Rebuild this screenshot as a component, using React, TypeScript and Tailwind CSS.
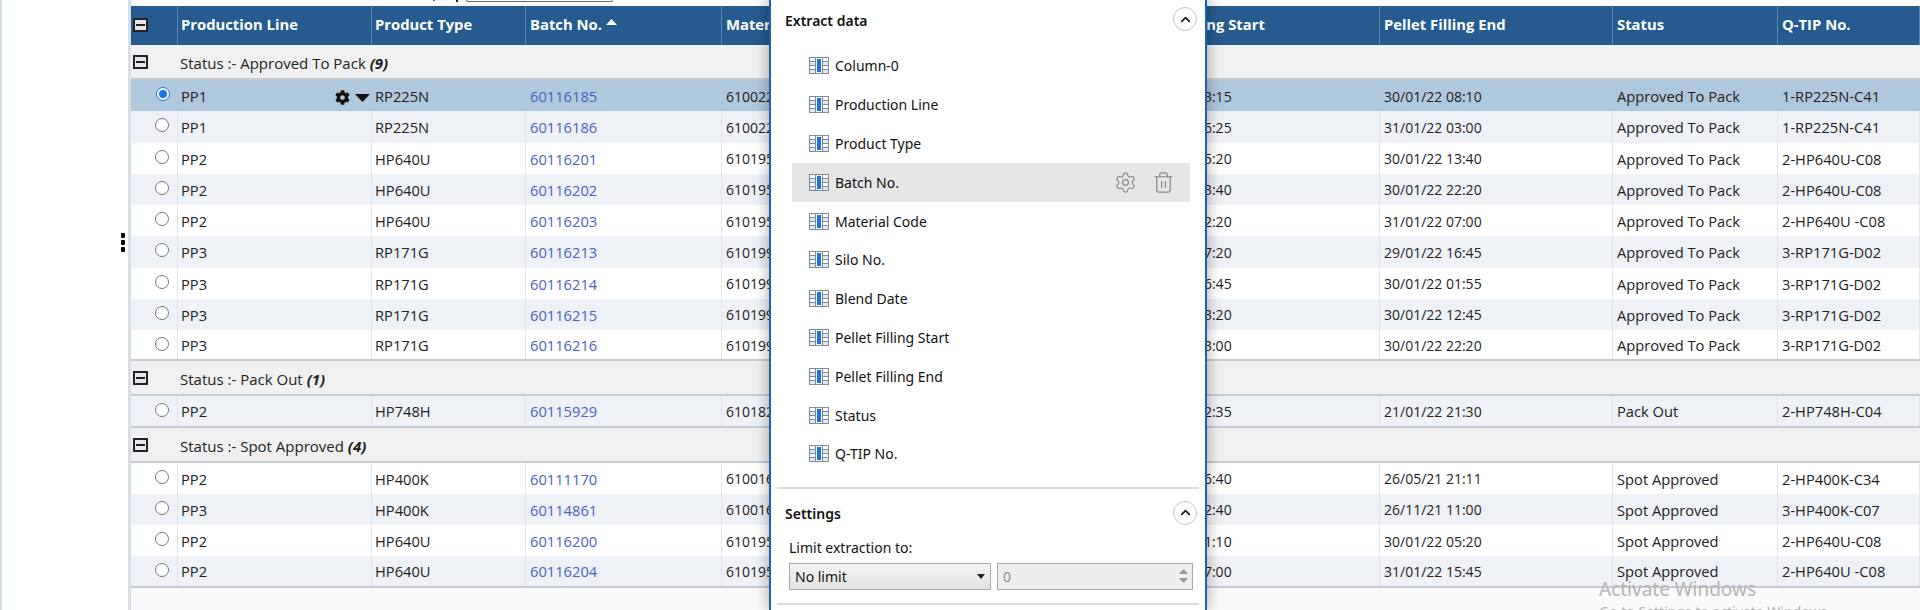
import { Settings, Trash2, ChevronUp } from "lucide-react";
import { FaCog } from "react-icons/fa";

const COLS = "grid grid-cols-[47px_194px_154px_196px_160px_124px_124px_250px_233px_165px_142px]";

type Row = { line: string; type: string; batch: string; code: string; start: string; end: string; qtip: string };

const groups: { status: string; count: number; rows: Row[] }[] = [
    {
        status: "Approved To Pack",
        count: 9,
        rows: [
            { line: "PP1", type: "RP225N", batch: "60116185", code: "61002250", start: "30/01/22 03:15", end: "30/01/22 08:10", qtip: "1-RP225N-C41" },
            { line: "PP1", type: "RP225N", batch: "60116186", code: "61002250", start: "30/01/22 16:25", end: "31/01/22 03:00", qtip: "1-RP225N-C41" },
            { line: "PP2", type: "HP640U", batch: "60116201", code: "61019500", start: "30/01/22 05:20", end: "30/01/22 13:40", qtip: "2-HP640U-C08" },
            { line: "PP2", type: "HP640U", batch: "60116202", code: "61019500", start: "30/01/22 13:40", end: "30/01/22 22:20", qtip: "2-HP640U-C08" },
            { line: "PP2", type: "HP640U", batch: "60116203", code: "61019500", start: "30/01/22 22:20", end: "31/01/22 07:00", qtip: "2-HP640U -C08" },
            { line: "PP3", type: "RP171G", batch: "60116213", code: "61019900", start: "29/01/22 07:20", end: "29/01/22 16:45", qtip: "3-RP171G-D02" },
            { line: "PP3", type: "RP171G", batch: "60116214", code: "61019900", start: "29/01/22 16:45", end: "30/01/22 01:55", qtip: "3-RP171G-D02" },
            { line: "PP3", type: "RP171G", batch: "60116215", code: "61019900", start: "30/01/22 03:20", end: "30/01/22 12:45", qtip: "3-RP171G-D02" },
            { line: "PP3", type: "RP171G", batch: "60116216", code: "61019900", start: "30/01/22 13:00", end: "30/01/22 22:20", qtip: "3-RP171G-D02" },
        ],
    },
    {
        status: "Pack Out",
        count: 1,
        rows: [{ line: "PP2", type: "HP748H", batch: "60115929", code: "61018200", start: "21/01/22 12:35", end: "21/01/22 21:30", qtip: "2-HP748H-C04" }],
    },
    {
        status: "Spot Approved",
        count: 4,
        rows: [
            { line: "PP2", type: "HP400K", batch: "60111170", code: "61001600", start: "26/05/21 06:40", end: "26/05/21 21:11", qtip: "2-HP400K-C34" },
            { line: "PP3", type: "HP400K", batch: "60114861", code: "61001600", start: "26/11/21 02:40", end: "26/11/21 11:00", qtip: "3-HP400K-C07" },
            { line: "PP2", type: "HP640U", batch: "60116200", code: "61019500", start: "29/01/22 21:10", end: "30/01/22 05:20", qtip: "2-HP640U-C08" },
            { line: "PP2", type: "HP640U", batch: "60116204", code: "61019500", start: "31/01/22 07:00", end: "31/01/22 15:45", qtip: "2-HP640U -C08" },
        ],
    },
];

const headers = ["Production Line", "Product Type", "Batch No.", "Material Code", "Silo No.", "Blend Date", "Pellet Filling Start", "Pellet Filling End", "Status", "Q-TIP No."];

const fields = ["Column-0", "Production Line", "Product Type", "Batch No.", "Material Code", "Silo No.", "Blend Date", "Pellet Filling Start", "Pellet Filling End", "Status", "Q-TIP No."];

const MinusBox = () => (
    <span className="flex h-[14px] w-[15px] items-center justify-center border-2 border-[#222] bg-[#e8e8e8]">
        <span className="h-[2px] w-[9px] bg-[#222]" />
    </span>
);

const Radio = ({ checked }: { checked?: boolean }) => (
    <span className={`block h-[14px] w-[14px] rounded-full border bg-white ${checked ? "border-[#1a73e8]" : "border-[#777]"}`}>
        {checked && <span className="m-[2px] block h-[8px] w-[8px] rounded-full bg-[#1a73e8]" />}
    </span>
);

// blue middle column, ruled side columns
const ColumnIcon = () => (
    <svg width="20" height="17" viewBox="0 0 20 17" className="shrink-0">
        <rect x="0" y="0" width="20" height="17" fill="#7f8b96" />
        <rect x="1" y="1" width="5" height="3" fill="#fff" />
        <rect x="1" y="5" width="5" height="3" fill="#e4e8ec" />
        <rect x="1" y="9" width="5" height="3" fill="#fff" />
        <rect x="1" y="13" width="5" height="3" fill="#e4e8ec" />
        <rect x="7" y="1" width="6" height="15" fill="#fff" />
        <rect x="8" y="2" width="4" height="13" fill="#1a73e8" />
        <rect x="14" y="1" width="5" height="3" fill="#fff" />
        <rect x="14" y="5" width="5" height="3" fill="#e4e8ec" />
        <rect x="14" y="9" width="5" height="3" fill="#fff" />
        <rect x="14" y="13" width="5" height="3" fill="#e4e8ec" />
    </svg>
);

const CollapseButton = () => (
    <span className="flex h-[24px] w-[24px] -translate-y-[1px] items-center justify-center rounded-full border border-[#c4c4c4] bg-white">
        <ChevronUp size={15} strokeWidth={3} className="text-[#222]" />
    </span>
);

function DataRow({ row, status, index, selected, last }: { row: Row; status: string; index: number; selected: boolean; last: boolean }) {
    const bg = selected ? "bg-[#b0c8dc]" : index % 2 === 1 ? "bg-[#eef2f6]" : "bg-white";
    const line = selected ? "" : "border-r border-[#e2e6ea]";
    const cell = `flex items-center overflow-hidden whitespace-nowrap pt-[1px] ${line}`;
    return (
        <div className={`${COLS} h-[31.25px] ${bg} ${last ? "border-b-2 border-[#c4ccd1]" : ""} text-[14.7px] text-[#222]`}>
            <div className={`flex justify-end pr-[8px] pt-[7px] ${line}`}>
                <Radio checked={selected} />
            </div>
            <div className={`${cell} justify-between pl-[3px] pr-[2px]`}>
                <span>{row.line}</span>
                {selected && (
                    <span className="flex items-center gap-[5px] pt-[3px]">
                        <FaCog size={15} className="text-[#111]" />
                        <svg width="15" height="8" viewBox="0 0 15 8">
                            <polygon points="0,0 15,0 7.5,8" fill="#111" />
                        </svg>
                    </span>
                )}
            </div>
            <div className={`${cell} pl-[3px]`}>{row.type}</div>
            <div className={`${cell} pl-[4px] text-[#4a5fc4]`}>{row.batch}</div>
            <div className={`${cell} pl-[4px] text-[14px]`}>{row.code}</div>
            <div className={cell} />
            <div className={cell} />
            <div className={`${cell} pl-[4px] text-[14px]`}>{row.start}</div>
            <div className={`${cell} pl-[4px] text-[14px]`}>{row.end}</div>
            <div className={`${cell} pl-[4px]`}>{status}</div>
            <div className={`${cell} pl-[4px]`}>{row.qtip}</div>
        </div>
    );
}

function FieldList() {
    return (
        <div className="mt-[6.5px] flex flex-col">
            {fields.map((name) => {
                const hovered = name === "Batch No.";
                return (
                    <div key={name} className={`ml-[21px] mr-[15px] flex h-[38.8px] items-center pl-[17px] pr-[15px] ${hovered ? "bg-[#e6e6e6]" : ""}`}>
                        <ColumnIcon />
                        <span className="ml-[6px] flex-1 text-[14px] text-[#111]">{name}</span>
                        {hovered && (
                            <span className="flex items-center gap-[15px] text-[#7c8791]">
                                <Settings size={23} strokeWidth={1.2} />
                                <Trash2 size={23} strokeWidth={1.2} />
                            </span>
                        )}
                    </div>
                );
            })}
        </div>
    );
}

function ExtractPanel() {
    return (
        <div className="absolute bottom-0 left-[769px] top-0 w-[438px] overflow-hidden border-x-2 border-[#1b62b0] bg-white font-['Noto_Sans',sans-serif] shadow-[0_0_14px_rgba(0,0,0,0.35)]">
            <div className="flex h-[40px] items-center justify-between pl-[14px] pr-[8px]">
                <span className="text-[14px] font-semibold text-[#111]">Extract data</span>
                <CollapseButton />
            </div>
            <FieldList />
            <div className="mx-[6px] mt-[13.5px] h-[2px] bg-[#dcdcdc]" />
            <div className="mt-[13px] flex items-center justify-between pl-[14px] pr-[8px]">
                <span className="text-[14px] font-semibold text-[#111]">Settings</span>
                <CollapseButton />
            </div>
            <div className="ml-[18px] mt-[12px] text-[14px] leading-[20px] text-[#111]">Limit extraction to:</div>
            <div className="ml-[18px] mt-[5px] flex gap-[6px]">
                <div className="flex h-[27px] w-[202px] items-center justify-between border border-[#a9a9a9] bg-gradient-to-b from-[#f4f4f4] to-[#e2e2e2] pl-[5px] pr-[5px] text-[14px] text-[#111]">
                    <span>No limit</span>
                    <svg width="8" height="5" viewBox="0 0 8 5">
                        <polygon points="0,0 8,0 4,5" fill="#222" />
                    </svg>
                </div>
                <div className="flex h-[27px] w-[196px] items-center justify-between border border-[#a9a9a9] bg-[#eeeeee] pl-[5px] pr-[4px] text-[14px] text-[#8a8a8a]">
                    <span>0</span>
                    <span className="flex flex-col gap-[4px]">
                        <svg width="9" height="5" viewBox="0 0 9 5">
                            <polygon points="0,5 9,5 4.5,0" fill="#9a9a9a" />
                        </svg>
                        <svg width="9" height="5" viewBox="0 0 9 5">
                            <polygon points="0,0 9,0 4.5,5" fill="#9a9a9a" />
                        </svg>
                    </span>
                </div>
            </div>
            <div className="mx-[6px] mt-[13px] h-[2px] bg-[#dcdcdc]" />
        </div>
    );
}

export default function App() {
    return (
        <div className="relative h-[610px] w-[1920px] overflow-hidden bg-white font-['Open_Sans',sans-serif]">
            <div className="absolute left-[466px] top-[-20px] h-[22px] w-[147px] rounded-[2px] border border-[#666] bg-white" />
            <span className="absolute left-[433px] top-0 h-[1px] w-[2px] bg-[#2a6fb5]" />
            <span className="absolute left-[456px] top-0 h-[2px] w-[2px] bg-[#222]" />
            <div className="absolute left-0 top-0 h-full w-[2px] bg-[#cfdde4]" />

            <div className="absolute left-[121px] top-[233px] flex flex-col gap-[2px]">
                <span className="h-[5px] w-[4px] rounded-[1px] bg-black" />
                <span className="h-[5px] w-[4px] rounded-[1px] bg-black" />
                <span className="h-[5px] w-[4px] rounded-[1px] bg-black" />
            </div>

            <div className="ml-[128px] flex h-full flex-col border-l-[3px] border-[#d4e0e6] bg-[#fafafa] pt-[6px]">
                <div className={`${COLS} h-[39px] bg-[#265b8f] text-[14.8px] font-bold text-white`}>
                    <div className="border-r border-[#5f88ae] pl-[2px] pt-[12px]">
                        <MinusBox />
                    </div>
                    {headers.map((h, i) => (
                        <div key={h} className={`flex items-center gap-[4px] overflow-hidden whitespace-nowrap border-r border-[#5f88ae] pb-[3px] ${i < 2 ? "pl-[3px]" : "pl-[4px]"}`}>
                            {h}
                            {h === "Batch No." && (
                                <svg width="11" height="6" viewBox="0 0 11 6" className="mb-[4px]">
                                    <polygon points="0,6 11,6 5.5,0" fill="#fff" />
                                </svg>
                            )}
                        </div>
                    ))}
                </div>

                {groups.map((g, gi) => (
                    <div key={g.status}>
                        <div className="flex h-[35px] border-b-2 border-[#c4ccd1] bg-[#f0f0f0] text-[15px] text-[#222]">
                            <div className="w-[47px] pl-[2px] pt-[10px]">
                                <MinusBox />
                            </div>
                            <div className="pl-[2px] pt-[7px]">
                                Status :- {g.status} <b className="italic">({g.count})</b>
                            </div>
                        </div>
                        {g.rows.map((row, i) => (
                            <DataRow key={row.batch} row={row} status={g.status} index={gi === 1 ? 1 : i} selected={row.batch === "60116185"} last={i === g.rows.length - 1} />
                        ))}
                    </div>
                ))}
            </div>

            <ExtractPanel />

            <div className="pointer-events-none absolute left-[1599px] top-[576px] font-['Noto_Sans',sans-serif] text-[#b5b5b5]">
                <div className="text-[19px] leading-[26px]">Activate Windows</div>
                <div className="text-[14px] leading-[20px]">Go to Settings to activate Windows.</div>
            </div>
        </div>
    );
}
